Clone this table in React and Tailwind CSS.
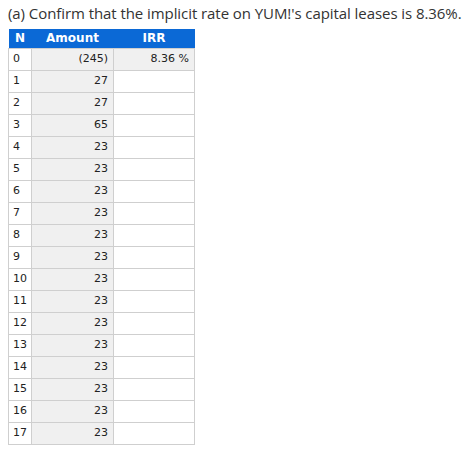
const rows = [
  { n: 0, amount: '(245)', irr: '8.36 %' },
  { n: 1, amount: '27' },
  { n: 2, amount: '27' },
  { n: 3, amount: '65' },
  { n: 4, amount: '23' },
  { n: 5, amount: '23' },
  { n: 6, amount: '23' },
  { n: 7, amount: '23' },
  { n: 8, amount: '23' },
  { n: 9, amount: '23' },
  { n: 10, amount: '23' },
  { n: 11, amount: '23' },
  { n: 12, amount: '23' },
  { n: 13, amount: '23' },
  { n: 14, amount: '23' },
  { n: 15, amount: '23' },
  { n: 16, amount: '23' },
  { n: 17, amount: '23' },
];

export default function App() {
  return (
    <div className="bg-white min-h-[453px] px-2 pt-[2px]">
      <p className="font-['Open_Sans',sans-serif] text-[15px] leading-[22px] tracking-[-0.07px] text-[#333]">
        (a) Confirm that the implicit rate on YUM!'s capital leases is 8.36%.
      </p>

      <table className="mt-[5px] border-collapse font-['DejaVu_Sans',sans-serif] text-[11px] text-[#222]">
        <thead>
          <tr className="bg-[#0b69d6] text-white text-[12px] font-bold h-[19px]">
            <th className="w-[23px] p-0 text-center">N</th>
            <th className="w-[82px] p-0 text-center">Amount</th>
            <th className="w-[81px] p-0 text-center">IRR</th>
          </tr>
        </thead>
        <tbody>
          {rows.map((r) => (
            <tr key={r.n} className="h-[22px]">
              <td className="border border-[#cfcfcf] bg-white pl-1 pr-0 py-0 text-left">{r.n}</td>
              <td className="border border-[#cfcfcf] bg-[#f0f0f0] pr-[5px] py-0 text-right">{r.amount}</td>
              <td className={`border border-[#cfcfcf] pr-[5px] py-0 text-right ${r.irr ? 'bg-[#f0f0f0]' : 'bg-white'}`}>
                {r.irr || ''}
              </td>
            </tr>
          ))}
        </tbody>
      </table>
    </div>
  );
}
